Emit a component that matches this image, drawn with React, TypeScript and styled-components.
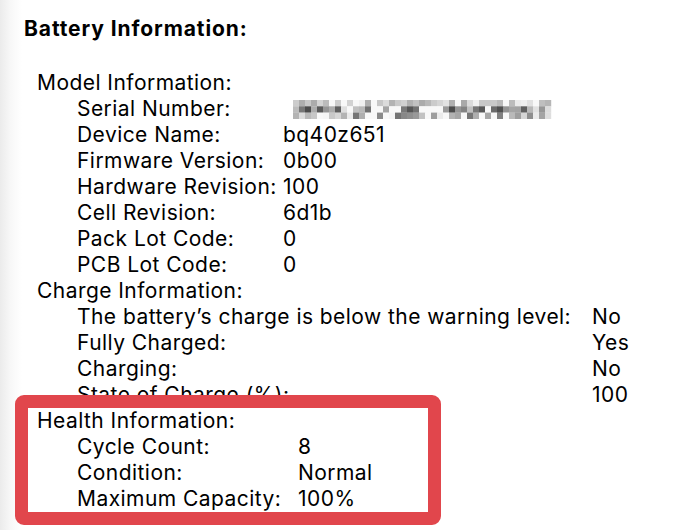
import React from "react";
import styled, { createGlobalStyle } from "styled-components";

const Global = createGlobalStyle`
  html, body { margin: 0; padding: 0; background: #fff; }
  body {
    font-family: Inter, "Liberation Sans", Arial, sans-serif;
    color: #000;
    -webkit-font-smoothing: antialiased;
  }
`;

const Page = styled.div`
  width: 680px;
  height: 530px;
  overflow: hidden;
  box-sizing: border-box;
  padding: 16px 0 0 24px;
  background: linear-gradient(to right, #ebebeb 0px, #f7f7f7 10px, #ffffff 22px);
  font-size: 21px;
  line-height: 26px;
  letter-spacing: 0.45px;
`;

const Title = styled.div`
  font-weight: 700;
  letter-spacing: 0.9px;
  margin-bottom: 28px;
`;

const Section = styled.section`
  margin-left: 13px;
`;

const SectionHead = styled.div``;

const Rows = styled.div<{ $labelW: number }>`
  display: grid;
  grid-template-columns: ${(p) => p.$labelW}px auto;
  padding-left: 40px;
`;

const Label = styled.div`
  white-space: nowrap;
`;

const Value = styled.div`
  white-space: nowrap;
`;

const Highlight = styled.section`
  position: relative;
  margin: -13px 0 0 -9px;
  width: 426px;
  box-sizing: border-box;
  padding-left: 9px;
  border: 13px solid #e1464c;
  border-radius: 9px;
  background: #fff;
`;

const Mosaic = styled.svg`
  display: block;
  margin: 4px 0 0 10px;
`;

const grays: number[][] = (() => {
  const rows: number[][] = [];
  let seed = 7;
  const rnd = () => {
    seed = (seed * 9301 + 49297) % 233280;
    return seed / 233280;
  };
  const ranges = [
    [165, 245],
    [75, 240],
    [110, 250],
  ];
  for (let r = 0; r < 3; r++) {
    const row: number[] = [];
    for (let c = 0; c < 43; c++) {
      const [lo, hi] = ranges[r];
      let v = lo + (hi - lo) * rnd();
      if (rnd() < 0.2) v = 248;
      row.push(Math.round(v));
    }
    rows.push(row);
  }
  return rows;
})();

const SerialBlur = () => (
  <Mosaic width={259} height={19} viewBox="0 0 259 19">
    {grays.map((row, r) =>
      row.map((g, c) => (
        <rect
          key={`${r}-${c}`}
          x={c * 6}
          y={r * 6.3}
          width={6.2}
          height={6.5}
          fill={`rgb(${g},${g},${g})`}
        />
      ))
    )}
  </Mosaic>
);

type Row = [string, React.ReactNode];

const model: Row[] = [
  ["Serial Number:", <SerialBlur />],
  ["Device Name:", "bq40z651"],
  ["Firmware Version:", "0b00"],
  ["Hardware Revision:", "100"],
  ["Cell Revision:", "6d1b"],
  ["Pack Lot Code:", "0"],
  ["PCB Lot Code:", "0"],
];

const charge: Row[] = [
  ["The battery\u2019s charge is below the warning level:", "No"],
  ["Fully Charged:", "Yes"],
  ["Charging:", "No"],
  ["State of Charge (%):", "100"],
];

const health: Row[] = [
  ["Cycle Count:", "8"],
  ["Condition:", "Normal"],
  ["Maximum Capacity:", "100%"],
];

const RowList = ({ rows, labelW }: { rows: Row[]; labelW: number }) => (
  <Rows $labelW={labelW}>
    {rows.map(([l, v], i) => (
      <React.Fragment key={i}>
        <Label>{l}</Label>
        <Value>{v}</Value>
      </React.Fragment>
    ))}
  </Rows>
);

export default function App() {
  return (
    <>
      <Global />
      <Page>
        <Title>Battery Information:</Title>
        <Section>
          <SectionHead>Model Information:</SectionHead>
          <RowList rows={model} labelW={206} />
        </Section>
        <Section>
          <SectionHead>Charge Information:</SectionHead>
          <RowList rows={charge} labelW={515} />
        </Section>
        <Highlight>
          <SectionHead>Health Information:</SectionHead>
          <RowList rows={health} labelW={221} />
        </Highlight>
      </Page>
    </>
  );
}
